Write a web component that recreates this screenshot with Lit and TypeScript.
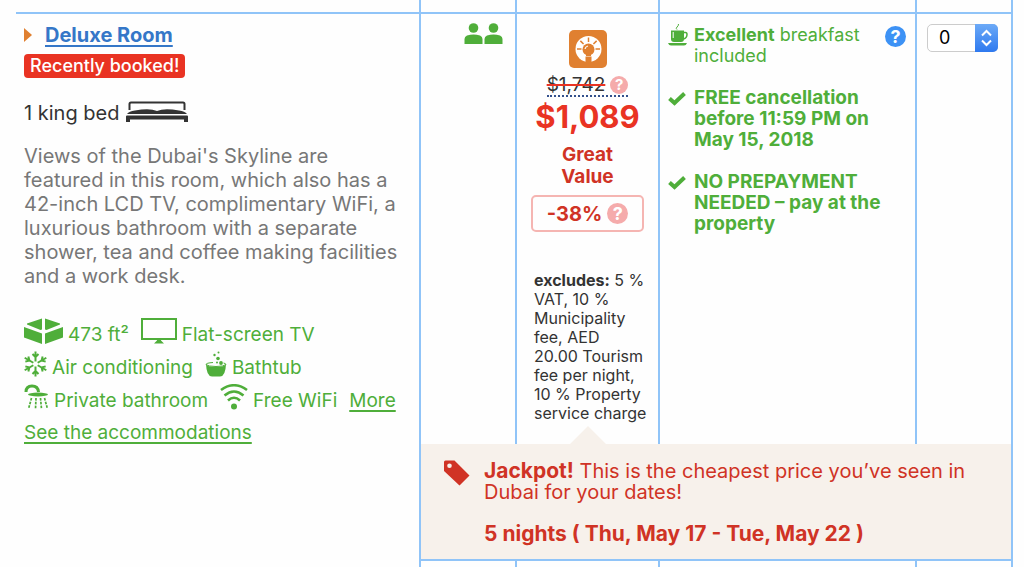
import { LitElement, html, css, svg } from "lit";
import { customElement, property, state } from "lit/decorators.js";

const bedIcon = html`<svg class="bed" viewBox="0 0 62 22" width="62" height="22" aria-hidden="true">
  <path d="M3.500 9V3Q3.500 1.500 5 1.500H57Q58.500 1.500 58.500 3V9" fill="none" stroke="currentColor" stroke-width="2" />
  <path d="M1 13Q3 10 9 9.500Q24 7 31 10Q38 7 53 9.500Q59 10 61 13Z" fill="currentColor" />
  <path d="M1 14.500H61Q62 14.500 62 15.500V21H58V18.500H4V21H0V15.500Q0 14.500 1 14.500Z" fill="currentColor" />
</svg>`;

const amenityIcons = {
  area: html`<svg viewBox="0 0 39 26" width="39" height="26" aria-hidden="true">
    <g fill="currentColor">
      <path d="M18 0.500V11.500L16.500 12L3 6.500V5.500Z" />
      <path d="M21 0.500V11.500L22.500 12L36 6.500V5.500Z" />
      <path d="M0 9L18 15.500V26L0 19.500Z" />
      <path d="M39 9L21 15.500V26L39 19.500Z" />
    </g>
  </svg>`,
  tv: html`<svg viewBox="0 0 36 26" width="36" height="26" aria-hidden="true">
    <rect x="1" y="1" width="34" height="20" fill="none" stroke="currentColor" stroke-width="2" />
    <path d="M16 21H20V22.500L23 25.500H13L16 22.500Z" fill="currentColor" />
  </svg>`,
  snow: html`<svg viewBox="0 0 23 26" width="23" height="26" aria-hidden="true">
    <g stroke="currentColor" stroke-width="2" fill="none">
      ${[0, 60, 120, 180, 240, 300].map(
        (a) => svg`<path transform="rotate(${a} 11.500 13)" d="M11.500 10.500V0.500M8.500 3L11.500 6L14.500 3" />`
      )}
    </g>
  </svg>`,
  bath: html`<svg viewBox="0 0 22 26" width="22" height="26" aria-hidden="true">
    <g fill="currentColor">
      <circle cx="13.500" cy="1.500" r="1" /><circle cx="9.500" cy="4" r="1.200" />
      <circle cx="13" cy="7.500" r="1.800" /><circle cx="16" cy="12" r="1.900" /><circle cx="12" cy="11.500" r="1" />
      <path d="M1 13Q2 16 11 16Q20 16 21 13Q20.500 25.500 15 25.500H7Q1.500 25.500 1 13Z" />
    </g>
    <path d="M8 11.500Q1 12 1 13.500Q3 15.500 11 15.500Q19 15.500 21 13.500Q21 12.500 18.500 12" fill="none" stroke="currentColor" stroke-width="1" />
  </svg>`,
  shower: html`<svg viewBox="0 0 25 26" width="25" height="26" aria-hidden="true">
    <path d="M2 8Q2 2 8 2Q14 2 14.500 8" fill="none" stroke="currentColor" stroke-width="3" />
    <ellipse cx="14" cy="10.500" rx="10" ry="1.900" fill="currentColor" />
    <path d="M7.500 14L4.500 25M12 14L11.500 25M16.500 14L17.500 25M20.500 14L23.500 25" fill="none" stroke="currentColor" stroke-width="1.700" stroke-dasharray="2.600 1.200" />
  </svg>`,
  wifi: html`<svg viewBox="0 0 28 26" width="28" height="26" aria-hidden="true">
    <g fill="none" stroke="currentColor" stroke-width="2.600">
      <path d="M1 6Q14 -3.500 27 6" /><path d="M4.500 11.500Q14 3.500 23.500 11.500" /><path d="M8 16.500Q14 11 20 16.500" />
    </g>
    <circle cx="14" cy="22.500" r="3" fill="currentColor" />
  </svg>`,
};

const checkIcon = html`<svg viewBox="0 0 18 15" width="18" height="15" aria-hidden="true">
  <path d="M1.500 7.500L6.500 12L16.500 2.500" fill="none" stroke="currentColor" stroke-width="4" />
</svg>`;

const cupIcon = html`<svg viewBox="0 0 20 22" width="20" height="22" aria-hidden="true">
  <g fill="currentColor">
    <path d="M3 6.500H16V15Q16 18 13 18H6Q3 18 3 15Z" />
    <path d="M0 19H19Q18 21.500 16 21.500H3Q1 21.500 0 19Z" />
  </g>
  <path d="M15.500 8.500H17.500Q19 8.500 19 10.500Q19 14 15.500 15" fill="none" stroke="currentColor" stroke-width="1.500" />
  <path d="M9 5.500Q7.500 4.500 9 3Q10.500 2 10.500 0" fill="none" stroke="currentColor" stroke-width="1" />
  <path d="M5.200 8V14" stroke="#fff" stroke-width="1" />
</svg>`;

const guestIcon = html`<svg viewBox="0 0 19 21" width="19" height="21" aria-hidden="true">
  <g fill="currentColor">
    <circle cx="9.500" cy="5" r="4.800" />
    <path d="M0.500 21V16Q0.500 13.500 3 12.500Q9.500 10.500 16 12.500Q18.500 13.500 18.500 16V21Z" />
  </g>
</svg>`;

const dealIcon = html`<svg viewBox="0 0 38 38" width="38" height="38" aria-hidden="true">
  <rect width="38" height="38" rx="5" fill="#e08030" />
  <circle cx="19.500" cy="19" r="13" fill="#fff" />
  <g stroke="#e08030" stroke-width="1.500">
    ${[-90, -45, 0, 45, 90].map((a) => svg`<path transform="rotate(${a} 19.500 19)" d="M19.500 7.500V12" />`)}
  </g>
  <circle cx="19.500" cy="19.500" r="6" fill="#e08030" />
  <path d="M16.500 26.500H22.500V33H16.500ZM17 24H22V26H17Z" fill="#e08030" />
  <path d="M16 19Q16.500 16.500 19 16" fill="none" stroke="#fff" stroke-width="1.200" />
</svg>`;

const tagIcon = html`<svg viewBox="0 0 26 26" width="26" height="26" aria-hidden="true">
  <path fill-rule="evenodd" fill="currentColor"
    d="M0 2Q0 0.500 1.500 0.500H10.500L25.500 15.500L15.500 25.500L0 11ZM5.500 3.400A2.300 2.300 0 1 0 5.500 8A2.300 2.300 0 1 0 5.500 3.400Z" />
</svg>`;

@customElement("help-mark")
class HelpMark extends LitElement {
  @property() label = "More information";
  static styles = css`
    :host { display: inline-flex; --tone: #f5abab; }
    :host([tone="info"]) { --tone: #3d92f5; }
    .mark {
      display: grid; place-items: center; width: 18px; height: 18px; padding: 0; border: 0;
      border-radius: 50%; background: var(--tone); cursor: pointer;
    }
    .glyph { color: #fff; font: 700 15px/18px Inter, sans-serif; }
    :host([size="large"]) .mark { width: 21px; height: 21px; }
    :host([size="large"]) .glyph { font-size: 18px; }
  `;
  render() {
    return html`<button class="mark" type="button" aria-label=${this.label}><span class="glyph">?</span></button>`;
  }
}

@customElement("app-root")
class AppRoot extends LitElement {
  @state() private rooms = "0";

  static styles = css`
    :host {
      display: block; min-height: 100vh; background: #fefefe; color: #333; overflow: hidden;
      font: 400 19px/24px Inter, "Liberation Sans", sans-serif;
      --line: #90c4f8; --green: #4fae3a; --red: #d03325;
    }
    .rates { width: calc(100% - 27px); margin: 0 11px 0 16px; table-layout: fixed; border-spacing: 0; }
    .guests-col { width: 96px; }
    .price-col { width: 143px; }
    .terms-col { width: 257px; }
    .select-col { width: 98px; }
    td, th { padding: 0; vertical-align: top; text-align: left; font-weight: 400; border-left: 2px solid var(--line); }
    tr > .last { border-right: 2px solid var(--line); }
    .edge td { height: 12px; }
    .edge .first, .offer .first { border-left: 0; }
    .offer td, .offer th { border-top: 2px solid var(--line); }
    .tail td { border-top: 2px solid var(--line); height: 12px; }
    svg { display: block; flex: none; }

    .room { padding: 9px 8px 0; }
    .name { display: flex; align-items: center; gap: 13px; font-weight: 700; font-size: 20px; }
    .name a { color: #3577c8; text-underline-offset: 3px; text-decoration-thickness: 2px; }
    .pointer { width: 8px; height: 14px; background: #e08030; clip-path: polygon(0 0, 100% 50%, 0 100%); }
    .booked {
      display: inline-block; margin-top: 7px; padding: 0 6px; border-radius: 4px;
      background: #e93323; color: #fff; font-size: 18px; font-weight: 500; line-height: 24px;
    }
    .beds { display: flex; align-items: center; gap: 7px; margin-top: 23px; font-size: 20px; }
    .beds svg { margin-bottom: 2px; }
    .about { margin: 19px 0 0; color: #777; font-size: 20px; }
    .amenities {
      display: flex; flex-wrap: wrap; column-gap: 12px; margin: 30px 0 0; padding: 0;
      list-style: none; color: var(--green); line-height: 33px;
    }
    .amenities li { display: flex; gap: 5px; }
    .amenities a, .see { color: var(--green); text-underline-offset: 3px; text-decoration-thickness: 2px; }
    .see { display: block; width: fit-content; line-height: 32px; }

    .guests { padding: 9px 12px 0 0; color: var(--green); }
    .people { display: flex; justify-content: flex-end; gap: 1px; }

    .price { padding: 16px 9px 21px; }
    .stack { display: flex; flex-direction: column; align-items: center; text-align: center; }
    .was { display: flex; align-items: center; margin-top: 6px; border-bottom: 2px dotted #33508c; font-size: 19px; line-height: 21px; }
    .was s { padding-right: 5px; text-decoration: line-through 2px #e93323; }
    .now { margin-top: 2px; color: #e93323; font-weight: 700; font-size: 31px; line-height: 36px; }
    .value { width: 80px; margin-top: 9px; color: var(--red); font-weight: 700; line-height: 22px; }
    .saving {
      display: flex; align-items: center; justify-content: center; gap: 5px; box-sizing: border-box;
      align-self: stretch; margin: 7px 5px 0; height: 37px; border: 2px solid #f5b5b2; border-radius: 5px;
      color: var(--red); font-weight: 700; font-size: 20px;
    }
    .fees { margin: 39px 0 0; padding-left: 8px; font-size: 16px; line-height: 19px; }

    .terms { padding: 10px 9px 0 8px; color: var(--green); }
    .term { display: grid; grid-template-columns: 18px 1fr auto; column-gap: 8px; margin: 0 0 21px; line-height: 21px; font-size: 18px; }
    .term.sure { font-weight: 700; font-size: 19px; }
    .term.sure svg { margin-top: 4px; }
    .term help-mark { margin-top: 2px; }

    .pick { padding: 10px 0 0 10px; }
    .chooser { display: inline-grid; width: 71px; height: 28px; }
    .chooser select, .chooser .arrows { grid-area: 1 / 1; }
    .chooser select {
      appearance: none; width: 100%; padding: 0 0 0 11px; border: 1px solid #ccc; border-radius: 5px;
      background: #fff; color: #000; font: 400 18px/26px Inter, sans-serif;
    }
    .arrows { justify-self: end; width: 23px; height: 28px; border-radius: 0 5px 5px 0; background: linear-gradient(#6caaf7, #2e79ef); pointer-events: none; }

    .deal { background: #f7f1eb; color: var(--red); }
    .deal-box { position: relative; display: flex; gap: 14px; padding: 16px 24px 14px 23px; line-height: 21px; font-size: 20px; }
    .deal-box b { font-size: 21px; }
    .deal-box::before {
      content: ""; position: absolute; left: 149px; bottom: 100%; width: 36px; height: 18px;
      background: #f7f1eb; clip-path: polygon(50% 0, 100% 100%, 0 100%);
    }
    .deal p { margin: 0 0 20px; }
    .deal p:last-child { margin: 0; }
  `;

  private amenity(icon: unknown, label: string) {
    return html`<li>${icon}<span>${label}</span></li>`;
  }

  render() {
    return html`
      <table class="rates">
        <colgroup>
          <col /><col class="guests-col" /><col class="price-col" /><col class="terms-col" /><col class="select-col" />
        </colgroup>
        <tbody>
          <tr class="edge"><td class="first"></td><td></td><td></td><td></td><td class="last"></td></tr>
          <tr class="offer">
            <th class="room first" scope="row" rowspan="3">
              <div class="name"><span class="pointer"></span><a href="#room">Deluxe Room</a></div>
              <span class="booked">Recently booked!</span>
              <div class="beds"><span>1 king bed</span>${bedIcon}</div>
              <p class="about">
                Views of the Dubai's Skyline are<br />
                featured in this room, which also has a 42-inch LCD TV,
                complimentary WiFi, a luxurious bathroom with a separate shower, tea and coffee making
                facilities and a work desk.
              </p>
              <ul class="amenities">
                ${this.amenity(amenityIcons.area, "473 ft²")}
                ${this.amenity(amenityIcons.tv, "Flat-screen TV")}
                ${this.amenity(amenityIcons.snow, "Air conditioning")}
                ${this.amenity(amenityIcons.bath, "Bathtub")}
                ${this.amenity(amenityIcons.shower, "Private bathroom")}
                ${this.amenity(amenityIcons.wifi, "Free WiFi")}
                <li><a href="#more">More</a></li>
              </ul>
              <a class="see" href="#photos">See the accommodations</a>
            </th>
            <td class="guests"><div class="people" role="img" aria-label="2">${guestIcon}${guestIcon}</div></td>
            <td class="price">
              <div class="stack">
                ${dealIcon}
                <div class="was"><s>$1,742</s><help-mark></help-mark></div>
                <div class="now">$1,089</div>
                <div class="value">Great Value</div>
                <div class="saving"><span>-38%</span><help-mark size="large"></help-mark></div>
              </div>
              <p class="fees">
                <b>excludes:</b> 5 % VAT, 10 % Municipality fee, AED<br />
                20.00 Tourism fee per night, 10 % Property service charge
              </p>
            </td>
            <td class="terms">
              <div class="term">${cupIcon}<span><b>Excellent</b> breakfast included</span><help-mark tone="info" size="large"></help-mark></div>
              <div class="term sure">${checkIcon}<span>FREE cancellation before 11:59 PM on May 15, 2018</span></div>
              <div class="term sure">${checkIcon}<span>NO PREPAYMENT NEEDED – pay at the property</span></div>
            </td>
            <td class="pick last">
              <label class="chooser">
                <select aria-label="Deluxe Room" .value=${this.rooms}
                  @change=${(e: Event) => (this.rooms = (e.target as HTMLSelectElement).value)}>
                  ${["0", "1", "2", "3"].map((n) => html`<option value=${n}>${n}</option>`)}
                </select>
                <svg class="arrows" viewBox="0 0 23 28" aria-hidden="true">
                  <path d="M7 11.500L11.500 7L16 11.500M7 16.500L11.500 21L16 16.500" fill="none" stroke="#fff" stroke-width="2" />
                </svg>
              </label>
            </td>
          </tr>
          <tr>
            <td class="deal last" colspan="4">
              <div class="deal-box">
                ${tagIcon}
                <div>
                  <p><b>Jackpot!</b> This is the cheapest price you’ve seen in Dubai for your dates!</p>
                  <p><b>5 nights ( Thu, May 17 - Tue, May 22 )</b></p>
                </div>
              </div>
            </td>
          </tr>
          <tr class="tail"><td></td><td></td><td></td><td class="last"></td></tr>
        </tbody>
      </table>
    `;
  }
}
